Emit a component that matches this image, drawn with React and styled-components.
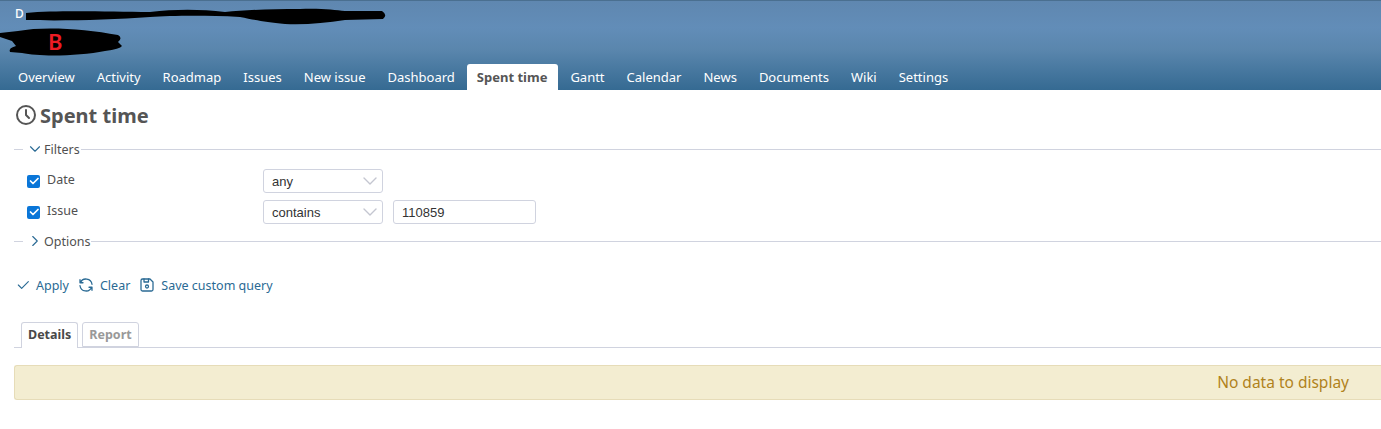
import React from "react";
import styled, { createGlobalStyle } from "styled-components";
import { TbChevronDown, TbChevronRight, TbCheck, TbRefresh, TbDeviceFloppy, TbClock } from "react-icons/tb";

const GlobalStyle = createGlobalStyle`
  html, body {
    margin: 0;
    padding: 0;
    background: #fff;
    overflow: hidden;
  }
  body {
    font-family: "Noto Sans", sans-serif;
    font-size: 13px;
    color: #484848;
  }
`;

const Header = styled.header`
  position: relative;
  height: 90px;
  box-sizing: border-box;
  border-top: 1px solid #4a6f90;
  background: linear-gradient(180deg, #5f87b0 0%, #628db8 30%, #5a86ad 55%, #356a92 100%);
  display: flex;
  flex-direction: column;
  justify-content: flex-end;
`;

const Scribble = styled.svg`
  position: absolute;
  left: 0;
  top: -1px;
`;

const TopMark = styled.span`
  position: absolute;
  left: 15px;
  top: 4px;
  color: #fff;
  font-size: 12px;
  font-weight: 500;
`;

const RedLetter = styled.span`
  position: absolute;
  left: 48px;
  top: 26px;
  color: #ed1c24;
  font-size: 22px;
  font-weight: 600;
  line-height: 28px;
`;

const TabBar = styled.nav`
  display: flex;
  padding-left: 7px;
  height: 26px;
`;

const NavTab = styled.a`
  display: block;
  padding: 0 11px 0 ${(p) => (p.$active ? "10px" : "11px")};
  margin: 0 ${(p) => (p.$active ? "1px" : "0")};
  line-height: 26px;
  font-size: 13px;
  color: ${(p) => (p.$active ? "#555" : "#fff")};
  background: ${(p) => (p.$active ? "#fff" : "transparent")};
  font-weight: ${(p) => (p.$active ? 700 : 400)};
  border-radius: 3px 3px 0 0;
`;

const Content = styled.main`
  padding: 0 0 0 14px;
`;

const Title = styled.h2`
  display: flex;
  align-items: center;
  gap: 2px;
  margin: 0;
  padding: 1px 0 0;
  height: 49px;
  box-sizing: border-box;
  font-size: 20px;
  line-height: 25px;
  font-weight: 700;
  color: #555;
`;

const Fieldset = styled.div`
  display: flex;
  align-items: center;
  height: 20px;
  color: #484848;
  &::before {
    content: "";
    width: 9px;
    height: 1px;
    background: #d0d3df;
    margin-right: 3px;
  }
  &::after {
    content: "";
    flex: 1;
    height: 1px;
    background: #d0d3df;
    margin-left: 1px;
  }
`;

const Legend = styled.span`
  display: flex;
  align-items: center;
  color: #505050;
  font-size: 12.5px;
  svg {
    color: #2a6a94;
  }
`;

const FilterList = styled.div`
  display: flex;
  flex-direction: column;
  gap: 7px;
  padding: 10px 0 7px 13px;
`;

const FilterRow = styled.div`
  display: flex;
  align-items: center;
  height: 24px;
`;

const FilterName = styled.label`
  width: 236px;
  display: flex;
  align-items: center;
  gap: 7px;
  font-size: 12.5px;
  color: #505050;
  position: relative;
  top: -2px;
`;

const CheckBox = styled.span`
  display: flex;
  align-items: center;
  justify-content: center;
  width: 13px;
  height: 13px;
  background: #0a76d8;
  border-radius: 2px;
  color: #fff;
  position: relative;
  top: 2px;
`;

const Control = styled.div`
  display: flex;
  align-items: center;
  justify-content: space-between;
  box-sizing: border-box;
  width: ${(p) => p.$width}px;
  height: 24px;
  margin-right: 10px;
  padding: 0 0 0 8px;
  border: 1px solid #d0d3df;
  border-radius: 3px;
  background: #fff;
  font-family: "Liberation Sans", Arial, sans-serif;
  font-size: 13px;
  color: #333;
  svg {
    color: #c4c6d0;
  }
`;

const Actions = styled.div`
  display: flex;
  align-items: center;
  padding: 24px 0 0 1px;
  height: 20px;
`;

const ActionLink = styled.a`
  display: flex;
  align-items: center;
  gap: 5px;
  margin-right: 8px;
  color: #2a6a94;
  font-size: 12.5px;
`;

const SubTabs = styled.div`
  display: flex;
  align-items: flex-end;
  margin-top: 26px;
  padding-left: 7px;
  height: 26px;
  border-bottom: 1px solid #d0d3df;
  gap: 4px;
`;

const SubTab = styled.a`
  box-sizing: border-box;
  height: ${(p) => (p.$active ? "26px" : "25px")};
  margin-bottom: ${(p) => (p.$active ? "-1px" : "0")};
  padding: 0 6px;
  line-height: 23px;
  font-size: 12.5px;
  font-weight: 700;
  color: ${(p) => (p.$active ? "#484848" : "#999")};
  background: #fff;
  border: 1px solid #d0d3df;
  border-bottom: ${(p) => (p.$active ? "none" : "1px solid #d0d3df")};
  border-radius: 3px 3px 0 0;
`;

const NoData = styled.div`
  margin-top: 17px;
  height: 35px;
  box-sizing: border-box;
  padding-right: 32px;
  text-align: right;
  line-height: 33px;
  font-size: 15.5px;
  color: #b0821c;
  background: #f3edd1;
  border: 1px solid #e6dcb8;
  border-right: none;
  border-radius: 3px 0 0 3px;
`;

const navItems = [
  "Overview", "Activity", "Roadmap", "Issues", "New issue", "Dashboard", "Spent time",
  "Gantt", "Calendar", "News", "Documents", "Wiki", "Settings",
];

export default function App() {
  return (
    <>
      <GlobalStyle />
      <Header>
        <TopMark>D</TopMark>
        <Scribble width="400" height="60" viewBox="0 0 400 60">
          <path d="M26 13 C60 10 110 12 150 12 C175 9 200 9 225 12 C245 10 270 9 300 9 C320 8 335 10 345 11 L382 11 Q388 15 383 19 L345 20 C325 23 305 25 285 24 C265 22 255 20 240 17 C200 15 170 16 150 17 C110 20 60 21 26 20 Z" fill="#000" />
          <path d="M0 33 L18 31 C45 26 85 29 118 35 Q123 38 118 42 L122 46 Q120 49 105 51 C80 56 40 57 22 53 L10 52 Q8 48 16 46 L12 41 L0 37 Z" fill="#000" />
        </Scribble>
        <RedLetter>B</RedLetter>
        <TabBar>
          {navItems.map((item) => (
            <NavTab key={item} $active={item === "Spent time"}>{item}</NavTab>
          ))}
        </TabBar>
      </Header>
      <Content>
        <Title>
          <TbClock size={24} color="#555" />
          Spent time
        </Title>
        <Fieldset>
          <Legend>
            <TbChevronDown size={18} strokeWidth={1.5} />
            Filters
          </Legend>
        </Fieldset>
        <FilterList>
          <FilterRow>
            <FilterName>
              <CheckBox><TbCheck size={12} strokeWidth={3.5} /></CheckBox>
              Date
            </FilterName>
            <Control $width={120}>
              any
              <TbChevronDown size={24} strokeWidth={1.4} />
            </Control>
          </FilterRow>
          <FilterRow>
            <FilterName>
              <CheckBox><TbCheck size={12} strokeWidth={3.5} /></CheckBox>
              Issue
            </FilterName>
            <Control $width={120}>
              contains
              <TbChevronDown size={24} strokeWidth={1.4} />
            </Control>
            <Control $width={143}>110859</Control>
          </FilterRow>
        </FilterList>
        <Fieldset>
          <Legend>
            <TbChevronRight size={18} strokeWidth={1.5} />
            Options
          </Legend>
        </Fieldset>
        <Actions>
          <ActionLink>
            <TbCheck size={16} strokeWidth={1.7} />
            Apply
          </ActionLink>
          <ActionLink>
            <TbRefresh size={18} strokeWidth={1.7} />
            Clear
          </ActionLink>
          <ActionLink>
            <TbDeviceFloppy size={18} strokeWidth={1.7} />
            Save custom query
          </ActionLink>
        </Actions>
        <SubTabs>
          <SubTab $active>Details</SubTab>
          <SubTab>Report</SubTab>
        </SubTabs>
        <NoData>No data to display</NoData>
      </Content>
    </>
  );
}
